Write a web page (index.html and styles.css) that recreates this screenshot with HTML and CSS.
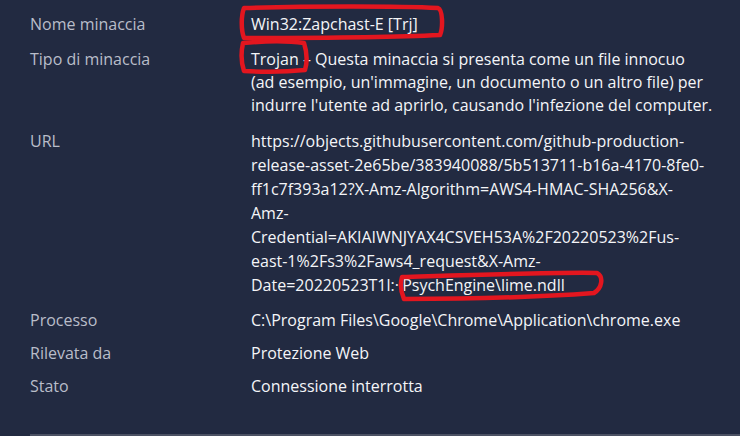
FILE: index.html
```html
<!DOCTYPE html>
<html lang="it">
<head>
<meta charset="utf-8">
<link rel="stylesheet" href="styles.css">
</head>
<body>
<div class="panel">
  <dl class="details">
    <div class="row">
      <dt>Nome minaccia</dt>
      <dd>Win32:Zapchast-E [Trj]</dd>
    </div>
    <div class="row">
      <dt>Tipo di minaccia</dt>
      <dd>Trojan – Questa minaccia si presenta come un file innocuo<br>(ad esempio, un'immagine, un documento o un altro file) per<br>indurre l'utente ad aprirlo, causando l'infezione del computer.</dd>
    </div>
    <div class="row url">
      <dt>URL</dt>
      <dd>https://objects.githubusercontent.com/github-production-<br>release-asset-2e65be/383940088/5b513711-b16a-4170-8fe0-<br>ff1c7f393a12?X-Amz-Algorithm=AWS4-HMAC-SHA256&amp;X-<br>Amz-<br>Credential=AKIAIWNJYAX4CSVEH53A%2F20220523%2Fus-<br>east-1%2Fs3%2Faws4_request&amp;X-Amz-<br>Date=20220523T1l:·&#8202;&#8202;PsychEngine\lime.ndll</dd>
    </div>
    <div class="row">
      <dt>Processo</dt>
      <dd>C:\Program Files\Google\Chrome\Application\chrome.exe</dd>
    </div>
    <div class="row compact">
      <dt>Rilevata da</dt>
      <dd>Protezione Web</dd>
    </div>
    <div class="row compact">
      <dt>Stato</dt>
      <dd>Connessione interrotta</dd>
    </div>
  </dl>
  <svg class="marks" width="740" height="436" viewBox="0 0 740 436">
    <path d="M244 8 C310 6 400 6 438 8 C443 10 443 28 440 35 C380 38 300 38 244 38 C241 30 241 16 244 8 Z" />
    <path d="M243 43 C265 41 290 41 304 43 C307 52 307 63 305 70 C285 72 262 72 244 71 C241 62 241 52 243 43 Z" />
    <path d="M402 277 C470 275 560 272 597 273 C604 277 602 288 594 293 C540 297 460 299 404 299 C401 292 400 284 402 277 Z" />
  </svg>
</div>
</body>
</html>
```
FILE: styles.css
```css
html, body {
  margin: 0;
  padding: 0;
}
body {
  width: 740px;
  height: 436px;
  background: #222a41;
  overflow: hidden;
  font-family: "Open Sans", "Liberation Sans", sans-serif;
  font-size: 16px;
}
.panel {
  position: relative;
  width: 740px;
  height: 436px;
  box-sizing: border-box;
  padding: 13px 0 0 30px;
}
.panel::after {
  content: "";
  position: absolute;
  left: 30px;
  right: 0;
  bottom: 0;
  height: 2px;
  background: #4b5163;
}
.details {
  margin: 0;
  display: flex;
  flex-direction: column;
  gap: 12px;
}
.row {
  display: grid;
  grid-template-columns: 221px 1fr;
  line-height: 23px;
}
.url {
  line-height: 24px;
}
.compact {
  margin-top: -2px;
}
dt {
  color: #b9bdc9;
}
dd {
  margin: 0;
  color: #f4f5f8;
  white-space: nowrap;
}
.marks {
  position: absolute;
  left: 0;
  top: 0;
  fill: none;
  stroke: #e3161f;
  stroke-width: 4.5;
  stroke-linejoin: round;
  stroke-linecap: round;
}
```
